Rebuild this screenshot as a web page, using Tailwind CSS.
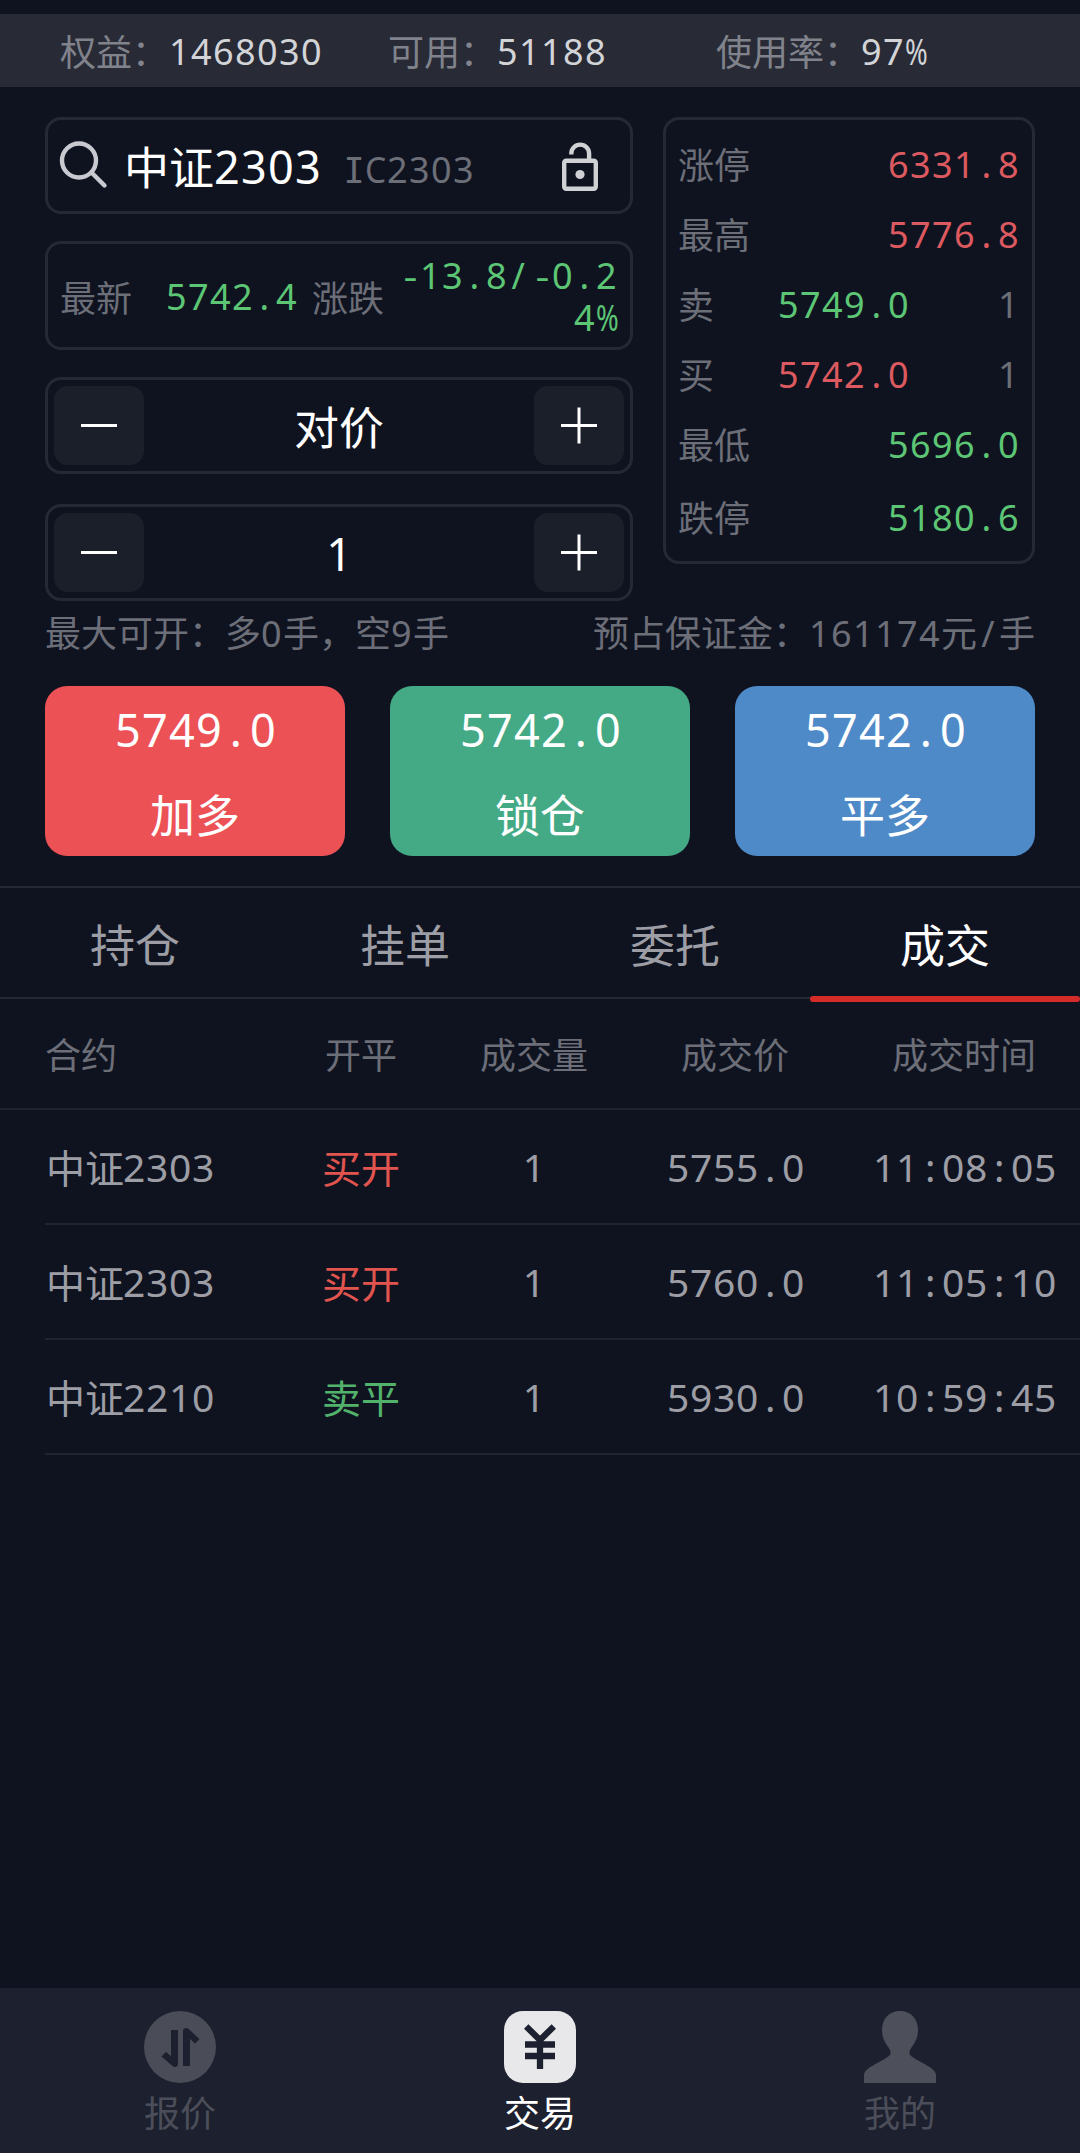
<!DOCTYPE html>
<html lang="zh-CN">
<head>
<meta charset="utf-8">
<title>交易</title>
<script src="https://cdn.jsdelivr.net/npm/@tailwindcss/browser@4"></script>
</head>
<body class="bg-[#0f1320]">
<div class="flex h-[2153px] w-[1080px] flex-col overflow-hidden bg-[#0f1320] pt-[14px] font-['Noto_Sans','Noto_Sans_CJK_SC',sans-serif] text-[36px] leading-[42px] whitespace-nowrap text-[#6c6e78]">

  <!-- Account summary -->
  <header class="flex h-[73px] items-center bg-[#282b36] pl-[60px] text-[#81838c]">
    <div class="flex w-[328px]"><span class="translate-y-[2px]">权益：</span><span class="translate-x-px translate-y-px tracking-[1.41px] text-[#d3d4d8]">1468030</span></div>
    <div class="flex w-[328px]"><span class="translate-y-[2px]">可用：</span><span class="translate-x-px translate-y-px tracking-[1.41px] text-[#d3d4d8]">51188</span></div>
    <div class="flex"><span class="translate-y-[2px]">使用率：</span><span class="translate-x-px translate-y-px tracking-[1.41px] text-[#d3d4d8]">97<span class="inline-block w-[22px] origin-left scale-x-[0.76] tracking-normal">%</span></span></div>
  </header>

  <main class="flex flex-1 flex-col">
    <section class="flex justify-between px-[45px] pt-[30px]">
      <div class="flex w-[588px] flex-col">
        <!-- Contract search -->
        <div class="flex h-[97px] items-center rounded-[16px] border-3 border-[#252936] pr-[31px] pl-[9px]">
          <svg class="h-[54px] w-[54px] shrink-0" viewBox="0 0 54 54" fill="none" stroke="#c8cad0" stroke-width="4.4" stroke-linecap="round">
            <circle cx="22" cy="21.500" r="17"/><path d="M34.500 33.500 47.500 46.500"/>
          </svg>
          <div class="flex flex-1 items-baseline pl-[13px]">
            <span class="translate-y-px text-[45px] leading-[54px] text-white"><span class="inline-block translate-y-px">中证</span><span class="tracking-[1.26px]">2303</span></span>
            <span class="ml-[21px] tracking-[1.41px]"><span class="inline-block w-[22px] text-center font-['DejaVu_Sans_Mono',monospace] text-[35px] tracking-normal">I</span><span class="inline-block w-[22px] origin-left scale-x-[0.93] tracking-normal">C</span>2303</span>
          </div>
          <svg class="h-[54px] w-[44px] shrink-0" viewBox="0 0 44 54" fill="none" stroke="#d0d1d5" stroke-width="4.4">
            <rect x="9.200" y="21.700" width="31.600" height="28" rx="2"/>
            <path d="M16.300 15.500v-1a8.900 8.900 0 0 1 17.800 0v7"/>
            <circle cx="25" cy="35.500" r="4.600" fill="#d0d1d5" stroke="none"/>
          </svg>
        </div>

        <!-- Latest price and change -->
        <div class="mt-[27px] flex h-[109px] items-center rounded-[16px] border-3 border-[#252936] pr-[12px] pl-[12px]">
          <span class="translate-y-[3px]">最新</span>
          <span class="ml-[33px] translate-x-px translate-y-px tracking-[1.41px] text-[#5cc675]">5742<span class="px-[0.152em]">.</span>4</span>
          <span class="ml-[15px] translate-y-[3px]">涨跌</span>
          <span class="ml-auto flex translate-y-px flex-col text-right tracking-[1.41px] text-[#5cc675]"><span><span class="mx-[5px] inline-block w-[12px] origin-left scale-x-[1.2] tracking-normal">-</span>13<span class="px-[0.152em]">.</span>8<span class="px-[0.1em]">/</span><span class="mx-[5px] inline-block w-[12px] origin-left scale-x-[1.2] tracking-normal">-</span>0<span class="px-[0.152em]">.</span>2</span><span>4<span class="inline-block w-[22px] text-left origin-left scale-x-[0.76] tracking-normal">%</span></span></span>
        </div>

        <!-- Price stepper -->
        <div class="mt-[27px] flex h-[97px] items-center justify-between rounded-[16px] border-3 border-[#252936] px-[6px]">
          <button class="flex h-[79px] w-[90px] items-center justify-center rounded-[14px] bg-[#1b1f2a]">
            <svg class="h-[37px] w-[36px]" viewBox="0 0 36 37" stroke="#fff" stroke-width="3"><path d="M0 18.500h36"/></svg>
          </button>
          <span class="translate-y-[2px] text-[45px] leading-[54px] text-white">对价</span>
          <button class="flex h-[79px] w-[90px] items-center justify-center rounded-[14px] bg-[#1b1f2a]">
            <svg class="h-[37px] w-[36px]" viewBox="0 0 36 37" stroke="#fff" stroke-width="3"><path d="M0 18.500h36M18 .5v36"/></svg>
          </button>
        </div>

        <!-- Quantity stepper -->
        <div class="mt-[30px] flex h-[97px] items-center justify-between rounded-[16px] border-3 border-[#252936] px-[6px]">
          <button class="flex h-[79px] w-[90px] items-center justify-center rounded-[14px] bg-[#1b1f2a]">
            <svg class="h-[37px] w-[36px]" viewBox="0 0 36 37" stroke="#fff" stroke-width="3"><path d="M0 18.500h36"/></svg>
          </button>
          <span class="translate-y-px text-[45px] leading-[54px] text-white">1</span>
          <button class="flex h-[79px] w-[90px] items-center justify-center rounded-[14px] bg-[#1b1f2a]">
            <svg class="h-[37px] w-[36px]" viewBox="0 0 36 37" stroke="#fff" stroke-width="3"><path d="M0 18.500h36M18 .5v36"/></svg>
          </button>
        </div>
      </div>

      <!-- Quote panel -->
      <div class="flex h-[447px] w-[372px] flex-col rounded-[16px] border-3 border-[#252936] pt-[10px] pr-[12px] pl-[12px]">
        <div class="flex h-[70px] items-center justify-between"><span class="translate-y-px">涨停</span><span class="tracking-[1.41px] text-[#dc5a5f]">6331<span class="px-[0.152em]">.</span>8</span></div>
        <div class="flex h-[70px] items-center justify-between"><span class="translate-y-px">最高</span><span class="tracking-[1.41px] text-[#dc5a5f]">5776<span class="px-[0.152em]">.</span>8</span></div>
        <div class="flex h-[70px] items-center"><span class="translate-y-px">卖</span><span class="ml-[64px] tracking-[1.41px] text-[#5cc675]">5749<span class="px-[0.152em]">.</span>0</span><span class="ml-auto tracking-[1.41px]">1</span></div>
        <div class="flex h-[70px] items-center"><span class="translate-y-px">买</span><span class="ml-[64px] tracking-[1.41px] text-[#dc5a5f]">5742<span class="px-[0.152em]">.</span>0</span><span class="ml-auto tracking-[1.41px]">1</span></div>
        <div class="flex h-[70px] items-center justify-between"><span class="translate-y-px">最低</span><span class="tracking-[1.41px] text-[#5cc675]">5696<span class="px-[0.152em]">.</span>0</span></div>
        <div class="flex h-[76px] items-center justify-between"><span class="translate-y-px">跌停</span><span class="tracking-[1.41px] text-[#5cc675]">5180<span class="px-[0.152em]">.</span>6</span></div>
      </div>
    </section>

    <div class="mt-[12px] flex justify-between px-[45px]">
      <span>最大可开：多<span class="tracking-[1.41px]">0</span>手，空<span class="tracking-[1.41px]">9</span>手</span>
      <span>预占保证金：<span class="tracking-[1.41px]">161174</span>元<span class="px-[0.12em]">/</span>手</span>
    </div>

    <!-- Order buttons -->
    <section class="mt-[31px] grid grid-cols-3 gap-[45px] px-[45px] text-[45px] leading-[85px] text-white">
      <button class="flex h-[170px] flex-col items-center rounded-[22px] bg-[#ec5156]"><span class="translate-x-px translate-y-px tracking-[1.26px]">5749<span class="px-[0.152em]">.</span>0</span><span class="translate-y-[2px]">加多</span></button>
      <button class="flex h-[170px] flex-col items-center rounded-[22px] bg-[#44a985]"><span class="translate-x-px translate-y-px tracking-[1.26px]">5742<span class="px-[0.152em]">.</span>0</span><span class="translate-y-[2px]">锁仓</span></button>
      <button class="flex h-[170px] flex-col items-center rounded-[22px] bg-[#4f8ac8]"><span class="translate-x-px translate-y-px tracking-[1.26px]">5742<span class="px-[0.152em]">.</span>0</span><span class="translate-y-[2px]">平多</span></button>
    </section>

    <!-- Tabs -->
    <nav class="relative mt-[30px] grid h-[113px] grid-cols-4 border-y-2 border-[#252936] text-center text-[45px] leading-[115px] text-[#9d9ea5]">
      <span>持仓</span><span>挂单</span><span>委托</span><span class="text-white">成交</span>
      <i class="absolute right-0 -bottom-[5px] h-[6px] w-[270px] rounded-full bg-[#d52b29]"></i>
    </nav>

    <!-- Trades -->
    <div class="grid h-[111px] grid-cols-[250px_132px_214px_188px_270px] items-center border-b-2 border-[#20242f] pt-[5px] pl-[45px] text-center">
      <span class="text-left">合约</span><span>开平</span><span>成交量</span><span>成交价</span><span>成交时间</span>
    </div>
    <div class="ml-[45px] text-[39px] leading-[48px] text-[#9d9ea5]">
      <div class="grid h-[115px] grid-cols-[250px_132px_214px_188px_270px] items-center border-b-2 border-[#20242f] text-center">
        <span class="text-left"><span class="inline-block translate-x-px translate-y-px">中证</span><span class="tracking-[0.7px]">2303</span></span><span class="translate-y-px text-[#e2554f]">买开</span><span>1</span><span class="translate-x-px tracking-[0.7px]">5755<span class="px-[0.152em]">.</span>0</span><span class="translate-x-px tracking-[0.7px]">11<span class="px-[0.152em]">:</span>08<span class="px-[0.152em]">:</span>05</span>
      </div>
      <div class="grid h-[115px] grid-cols-[250px_132px_214px_188px_270px] items-center border-b-2 border-[#20242f] text-center">
        <span class="text-left"><span class="inline-block translate-x-px translate-y-px">中证</span><span class="tracking-[0.7px]">2303</span></span><span class="translate-y-px text-[#e2554f]">买开</span><span>1</span><span class="translate-x-px tracking-[0.7px]">5760<span class="px-[0.152em]">.</span>0</span><span class="translate-x-px tracking-[0.7px]">11<span class="px-[0.152em]">:</span>05<span class="px-[0.152em]">:</span>10</span>
      </div>
      <div class="grid h-[115px] grid-cols-[250px_132px_214px_188px_270px] items-center border-b-2 border-[#20242f] text-center">
        <span class="text-left"><span class="inline-block translate-x-px translate-y-px">中证</span><span class="tracking-[0.7px]">2210</span></span><span class="translate-y-px text-[#52b26b]">卖平</span><span>1</span><span class="translate-x-px tracking-[0.7px]">5930<span class="px-[0.152em]">.</span>0</span><span class="translate-x-px tracking-[0.7px]">10<span class="px-[0.152em]">:</span>59<span class="px-[0.152em]">:</span>45</span>
      </div>
    </div>
  </main>

  <!-- Bottom navigation -->
  <footer class="grid h-[165px] shrink-0 grid-cols-3 bg-[#1d202e] pt-[23px] text-[#4b4e59]">
    <div class="flex flex-col items-center gap-[10px]">
      <svg class="h-[72px] w-[72px]" viewBox="0 0 72 72">
        <circle cx="36" cy="36" r="36" fill="#4a4c57"/>
        <path fill="#1d202e" d="M27 19h7v34c0 3-3.500 4-5.500 2L17.500 45.500l4.500-4.800 5 4.600zM46 55h-7V20c0-3 3.500-4 5.500-2.200L55.500 28 51 32.500l-5-4.600z"/>
      </svg>
      <span>报价</span>
    </div>
    <div class="flex flex-col items-center gap-[10px] text-white">
      <svg class="h-[72px] w-[72px]" viewBox="0 0 72 72">
        <rect width="72" height="72" rx="19" fill="#e8e8ea"/>
        <path fill="none" stroke="#1d202e" stroke-width="6.300" d="M22.200 15.500 36 29 49.800 15.500M36 27v31M21 33.500h30M21 45h30"/>
      </svg>
      <span>交易</span>
    </div>
    <div class="flex flex-col items-center gap-[10px]">
      <svg class="h-[72px] w-[72px]" viewBox="0 0 72 72" fill="#4d4f5a">
        <path d="M36 0c11 0 18 8 18 19 0 7-2 11-5.500 16-2 3-3.500 5-3 7.500.4 2 2.500 3.500 6 5.500l9 5c6 3.500 11.500 6.500 11.500 11V72H0v-8c0-4.500 5.500-7.500 11.500-11l9-5c3.500-2 5.600-3.500 6-5.500.5-2.500-1-4.500-3-7.500C20 30 18 26 18 19 18 8 25 0 36 0z"/>
      </svg>
      <span>我的</span>
    </div>
  </footer>
</div>
</body>
</html>
